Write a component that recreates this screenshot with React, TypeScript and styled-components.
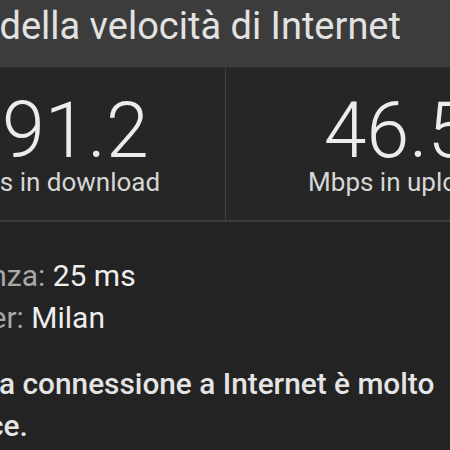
import React from 'react'
import styled, { createGlobalStyle } from 'styled-components'

const GlobalStyle = createGlobalStyle`
    html, body {
        margin: 0;
        padding: 0;
        background: #232323;
    }
    body {
        font-family: Roboto, "Liberation Sans", sans-serif;
    }
`

interface Speed {
    value: string
    label: string
}

const speeds: Speed[] = [
    { value: '191.2', label: 'Mbps in download' },
    { value: '46.5', label: 'Mbps in upload' },
]

export default function App() {
    return (
        <Page>
            <GlobalStyle />
            <Card>
                <Header>Test della velocità di Internet</Header>
                <Stats>
                    {speeds.map((s, i) => (
                        <StatCell key={s.label} divided={i > 0}>
                            <StatValue>{s.value}</StatValue>
                            <StatLabel>{s.label}</StatLabel>
                        </StatCell>
                    ))}
                </Stats>
                <Details>
                    <DetailRow>
                        <DetailKey>Latenza: </DetailKey>
                        <DetailValue>25 ms</DetailValue>
                    </DetailRow>
                    <DetailRow>
                        <DetailKey>Server: </DetailKey>
                        <DetailValue>Milan</DetailValue>
                    </DetailRow>
                    <Verdict>La tua connessione a Internet è molto veloce.</Verdict>
                </Details>
            </Card>
        </Page>
    )
}

const Page = styled.div`
    width: 450px;
    height: 450px;
    overflow: hidden;
    background: #232323;
`

// the screenshot is a crop of a wider card, so it starts left of the viewport
const Card = styled.div`
    width: 685px;
    margin-left: -117px;
    display: flex;
    flex-direction: column;
`

const Header = styled.div`
    height: 68px;
    box-sizing: border-box;
    padding: 4px 0 0 34px;
    background: #3c3c3c;
    border-bottom: 1px solid #2b2b2b;
    color: #e2e2e2;
    font-size: 38px;
    line-height: 1.2;
    white-space: nowrap;
`

const Stats = styled.div`
    display: grid;
    grid-template-columns: 342px 1fr;
    background: #262626;
    border-bottom: 2px solid #3a3a3a;
`

const StatCell = styled.div<{ divided?: boolean }>`
    display: flex;
    flex-direction: column;
    align-items: center;
    padding: 26px 0 23px;
    border-left: ${p => (p.divided ? '1px solid #444' : 'none')};
`

const StatValue = styled.div`
    font-size: 77px;
    font-weight: 300;
    line-height: 74px;
    color: #ececec;
    white-space: nowrap;
`

const StatLabel = styled.div`
    font-size: 26px;
    line-height: 29px;
    color: #d6d6d6;
    white-space: nowrap;
`

const Details = styled.div`
    display: flex;
    flex-direction: column;
    padding: 33px 0 0 49px;
`

const DetailRow = styled.div`
    font-size: 30px;
    line-height: 42px;
    white-space: nowrap;
`

const DetailKey = styled.span`
    color: #a8a8a8;
`

const DetailValue = styled.span`
    color: #eeeeee;
`

const Verdict = styled.div`
    margin: 24px 0 0 1px;
    max-width: 530px;
    font-size: 29.8px;
    font-weight: 500;
    line-height: 42px;
    color: #e4e4e4;
`
